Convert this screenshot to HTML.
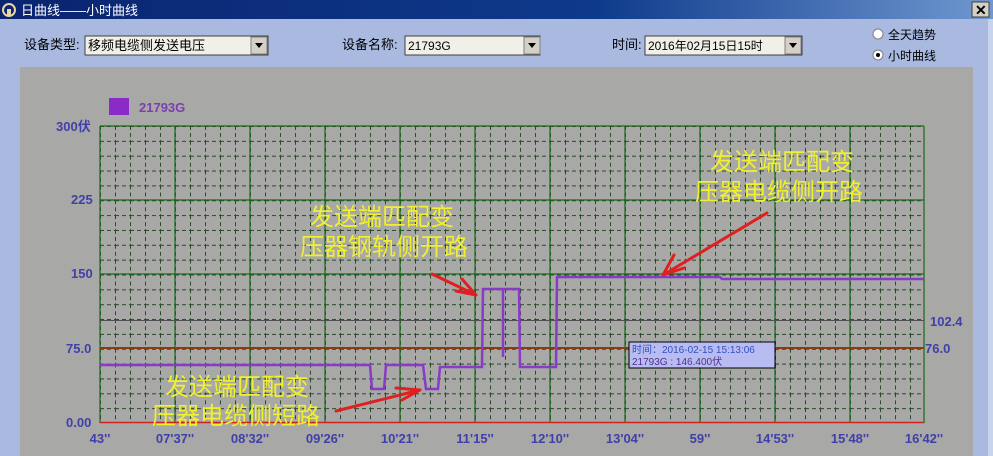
<!DOCTYPE html>
<html><head><meta charset="utf-8"><style>
body{margin:0;width:993px;height:456px;overflow:hidden;background:#a9b9e0;font-family:"Liberation Sans","Noto Sans CJK SC",sans-serif}
</style></head><body>
<svg width="993" height="456" xmlns="http://www.w3.org/2000/svg" style="position:absolute;left:0;top:0">
<defs>
<linearGradient id="tb" x1="0" x2="1"><stop offset="0" stop-color="#0a2470"/><stop offset="0.6" stop-color="#0e3a8c"/><stop offset="1" stop-color="#6f98d0"/></linearGradient>
<pattern id="mg" x="100" y="126" width="15" height="14.85" patternUnits="userSpaceOnUse">
<path d="M0.5 0V14.85M0 0.5H15" stroke="#2a4a2a" stroke-width="1" stroke-dasharray="4,3" fill="none"/>
</pattern>
</defs>
<rect x="0" y="0" width="993" height="19" fill="url(#tb)"/>
<circle cx="9" cy="10" r="6" fill="none" stroke="#e8d8a0" stroke-width="2"/>
<rect x="7" y="9" width="4" height="6" fill="#e8d8a0"/>
<text x="21" y="15" font-size="13" fill="#fff" font-family="Liberation Sans,'Noto Sans CJK SC',sans-serif">日曲线——小时曲线</text>
<rect x="972" y="2" width="17" height="15" fill="#d4d0c8" stroke="#404040"/>
<text x="975" y="15" font-size="14" font-weight="bold" fill="#000">✕</text>
<rect x="988" y="19" width="5" height="437" fill="#c8d4ec"/>
<g font-size="13" fill="#000">
<text x="24" y="49">设备类型:</text>
<rect x="85" y="36" width="183" height="19" fill="#f0f0e8" stroke="#404040"/>
<text x="88" y="50">移频电缆侧发送电压</text>
<rect x="251" y="37" width="16" height="17" fill="#d4d0c8" stroke="#808080"/><path d="M255 43h8l-4 5z" fill="#000"/>
<text x="342" y="49">设备名称:</text>
<rect x="405" y="36" width="135" height="19" fill="#f0f0e8" stroke="#404040"/>
<text x="408" y="50" font-size="12">21793G</text>
<rect x="524" y="37" width="16" height="17" fill="#d4d0c8" stroke="#808080"/><path d="M528 43h8l-4 5z" fill="#000"/>
<text x="612" y="49">时间:</text>
<rect x="645" y="36" width="157" height="19" fill="#f0f0e8" stroke="#404040"/>
<text x="648" y="50" font-size="12">2016年02月15日15时</text>
<rect x="785" y="37" width="16" height="17" fill="#d4d0c8" stroke="#808080"/><path d="M789 43h8l-4 5z" fill="#000"/>
<circle cx="878" cy="34" r="5" fill="#fff" stroke="#808080"/>
<text x="888" y="39" font-size="12">全天趋势</text>
<circle cx="878" cy="55" r="5" fill="#fff" stroke="#808080"/><circle cx="878" cy="55" r="2" fill="#000"/>
<text x="888" y="60" font-size="12">小时曲线</text>
</g>
<rect x="20" y="67" width="953" height="389" fill="#a8a8a6"/>
<rect x="109" y="98" width="20" height="17" fill="#8a2bc8"/>
<text x="139" y="112" font-size="13" font-weight="bold" fill="#7a40b0">21793G</text>
<rect x="100" y="126" width="824" height="297" fill="url(#mg)"/>
<g stroke="#1a6a1a" stroke-width="1.2">
<path d="M100 126V423M175 126V423M250 126V423M325 126V423M400 126V423M475 126V423M550 126V423M625 126V423M700 126V423M775 126V423M850 126V423M924 126V423"/>
<path d="M100 126H924M100 200H924M100 274H924"/>
</g>
<path d="M100 320.5H924" stroke="#505050" stroke-width="1"/>
<path d="M100 348H924" stroke="#8b3a10" stroke-width="2"/>
<path d="M100 422.5H924" stroke="#d02020" stroke-width="1.5"/>
<path d="M100 365H370L372 389H384L386 365H423L426 389H438L440 367H470L482 367L483 289H503V357V289H519L520 367H556L557 277H720L722 279H924" fill="none" stroke="#8a3ac8" stroke-width="2.5"/>
<g font-size="13" font-weight="bold" fill="#4040a8">
<text x="56" y="131">300伏</text>
<text x="71" y="204">225</text>
<text x="71" y="278">150</text>
<text x="66" y="353">75.0</text>
<text x="66" y="427">0.00</text>
<text x="930" y="326">102.4</text>
<text x="925" y="353">76.0</text>
<g text-anchor="middle">
<text x="100" y="443">43''</text><text x="175" y="443">07'37''</text><text x="250" y="443">08'32''</text><text x="325" y="443">09'26''</text><text x="400" y="443">10'21''</text><text x="475" y="443">11'15''</text><text x="550" y="443">12'10''</text><text x="625" y="443">13'04''</text><text x="700" y="443">59''</text><text x="775" y="443">14'53''</text><text x="850" y="443">15'48''</text><text x="924" y="443">16'42''</text>
</g></g>
<rect x="629" y="342" width="146" height="26" fill="#b8bcf0" stroke="#000"/>
<text x="632" y="353" font-size="10" fill="#3050c0">时间：2016-02-15 15:13:06</text>
<text x="632" y="365" font-size="10" fill="#503090">21793G : 146.400伏</text>
<g font-size="24" fill="#f0f030" font-family="'Noto Sans CJK SC',sans-serif">
<text x="165" y="395">发送端匹配变</text>
<text x="152" y="424">压器电缆侧短路</text>
<text x="310" y="225">发送端匹配变</text>
<text x="300" y="255">压器钢轨侧开路</text>
<text x="710" y="170">发送端匹配变</text>
<text x="695" y="200">压器电缆侧开路</text>
</g>
<g stroke="#e02020" stroke-width="3" fill="none" stroke-linecap="round">
<path d="M336 411L420 390M420 390L396 388M420 390L402 400"/>
<path d="M432 274L476 295M476 295L462 279M476 295L456 291"/>
<path d="M767 213L663 275M663 275L674 255M663 275L684 268"/>
</g>
</svg>
</body></html>
